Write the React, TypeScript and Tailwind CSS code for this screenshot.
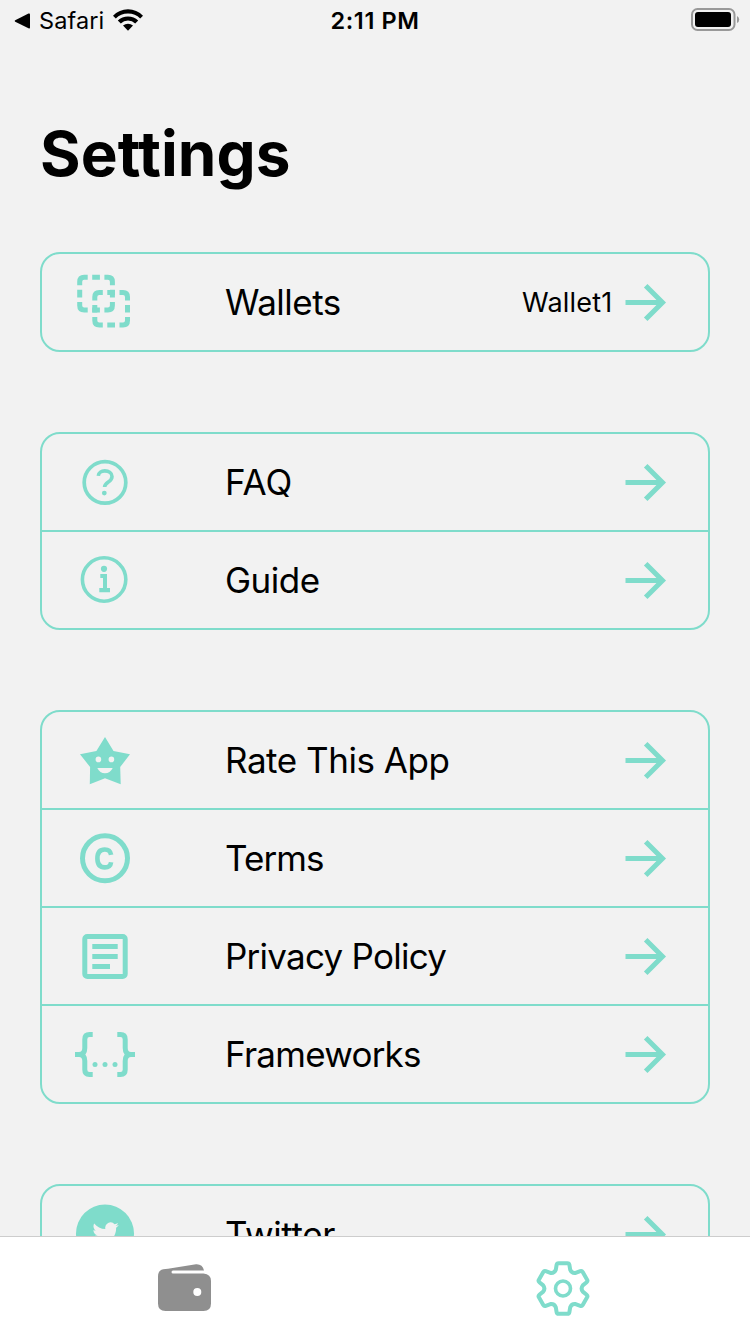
import type { ReactNode } from "react";

type IconProps = { children: ReactNode };

function RowIcon({ children }: IconProps) {
  return (
    <svg viewBox="-36 -36 72 72" className="h-[72px] w-[72px] shrink-0" fill="none" stroke="none">
      {children}
    </svg>
  );
}

const TEAL = "#7fdccb";

const dashedSquare =
  "M2.5 10.5V7Q2.5 2.5 7 2.5H10.5M15 2.5H22.7M27.2 2.5H30.7Q35.2 2.5 35.2 7V10.5M35.2 15V22.7M35.2 27.2V30.7Q35.2 35.2 30.7 35.2H27.2M22.7 35.2H15M10.5 35.2H7Q2.5 35.2 2.5 30.7V27.2M2.5 22.7V15";

const brace = "M-12.3 -19.5H-15.5Q-20.2 -19.5 -20.2 -14.8V-6Q-20.2 .5 -26 .5H-30M-26 .5Q-20.2 .5 -20.2 7V15.8Q-20.2 20.5 -15.5 20.5H-12.3";

const icons = {
  wallets: (
    <RowIcon>
      <path d={dashedSquare} transform="translate(-27.8 -27.2)" stroke={TEAL} strokeWidth="5" />
      <path d={dashedSquare} transform="translate(-12.7 -12.1)" stroke={TEAL} strokeWidth="5" />
    </RowIcon>
  ),
  faq: (
    <RowIcon>
      <circle cx="0" cy="0.4" r="20.8" stroke={TEAL} strokeWidth="3.7" />
      <path
        d="M-6.7 -6.2C-6.4 -9.4 -3.6 -11.1 -.3 -11.1C3.9 -11.1 7 -9 7 -5.6C7 -2.8 5.4 -1.5 3.3 -.1C.8 1.6 -.4 2.7 -.4 5"
        stroke={TEAL}
        strokeWidth="3.6"
      />
      <circle cx="-0.7" cy="11.1" r="2.4" fill={TEAL} />
    </RowIcon>
  ),
  guide: (
    <RowIcon>
      <circle cx="-0.9" cy="-0.5" r="21.7" stroke={TEAL} strokeWidth="3.6" />
      <circle cx="-1" cy="-11.2" r="3.1" fill={TEAL} />
      <path d="M-4.7 -6H2V8H5V12.3H-5.7V8H-2V-2H-4.7Z" fill={TEAL} />
    </RowIcon>
  ),
  rate: (
    <RowIcon>
      <path
        fillRule="evenodd"
        fill={TEAL}
        d="M0 -23L8.5 -9L25 -5.7L15.2 7L15.7 24.2L0 18.3L-15.2 24.2L-14.9 7L-25 -5.7L-8.6 -9ZM-9.4 -.6a2.8 2.8 0 1 0 5.6 0a2.8 2.8 0 1 0 -5.6 0ZM3.6 -.6a2.8 2.8 0 1 0 5.6 0a2.8 2.8 0 1 0 -5.6 0ZM-7.7 8H7.7C6 11.6 3.4 13.3 0 13.3C-3.4 13.3 -6 11.6 -7.7 8Z"
      />
    </RowIcon>
  ),
  terms: (
    <RowIcon>
      <circle cx="0" cy="0.3" r="22.5" stroke={TEAL} strokeWidth="5" />
      <path
        d="M6.1 -3.2C5.5 -6.8 3.3 -8.5 -.2 -8.5C-5 -8.5 -7.6 -5.3 -7.6 .5C-7.6 6.3 -5 9.4 -.2 9.4C3.3 9.4 5.6 7.8 6.1 4.2"
        stroke={TEAL}
        strokeWidth="4.6"
      />
    </RowIcon>
  ),
  privacy: (
    <RowIcon>
      <rect x="-20.2" y="-19.5" width="40.4" height="40" rx="2.5" stroke={TEAL} strokeWidth="5" />
      <path d="M-12.7 -9.5H12.7M-12.7 .5H12.7M-12.7 10.5H5" stroke={TEAL} strokeWidth="5" />
    </RowIcon>
  ),
  frameworks: (
    <RowIcon>
      <path d={brace} stroke={TEAL} strokeWidth="5" />
      <path d={brace} transform="scale(-1 1)" stroke={TEAL} strokeWidth="5" />
      <circle cx="-10" cy="10.4" r="2.5" fill={TEAL} />
      <circle cx="0" cy="10.4" r="2.5" fill={TEAL} />
      <circle cx="10" cy="10.4" r="2.5" fill={TEAL} />
    </RowIcon>
  ),
  twitter: (
    <RowIcon>
      <circle cx="0" cy="-0.5" r="29" fill={TEAL} />
      <path
        transform="translate(-12.6 -14) scale(1.1)"
        fill="#f2f2f2"
        d="M23.953 4.57a10 10 0 01-2.825.775 4.958 4.958 0 002.163-2.723c-.951.555-2.005.959-3.127 1.184a4.92 4.92 0 00-8.384 4.482C7.69 8.095 4.067 6.13 1.64 3.162a4.822 4.822 0 00-.666 2.475c0 1.71.87 3.213 2.188 4.096a4.904 4.904 0 01-2.228-.616v.06a4.923 4.923 0 003.946 4.827 4.996 4.996 0 01-2.212.085 4.936 4.936 0 004.604 3.417 9.867 9.867 0 01-6.102 2.105c-.39 0-.779-.023-1.17-.067a13.995 13.995 0 007.557 2.209c9.053 0 13.998-7.496 13.998-13.985 0-.21 0-.42-.015-.63A9.935 9.935 0 0024 4.59z"
      />
    </RowIcon>
  ),
};

function Arrow() {
  return (
    <svg viewBox="0 0 42 40" className="h-10 w-[42px] shrink-0" fill="none" stroke={TEAL} strokeWidth="5">
      <path d="M.5 20.5H38M20.7 3.7L37.5 20.5L20.7 37.3" />
    </svg>
  );
}

type RowData = { icon: keyof typeof icons; label: string; value?: string; spacing: string };

function Row({ icon, label, value, spacing }: RowData) {
  return (
    <div className="box-content flex h-24 items-center">
      <div className="pl-[27px]">{icons[icon]}</div>
      <span className={`ml-[84px] flex-1 text-[35px] leading-[48px] whitespace-nowrap ${spacing}`}>{label}</span>
      {value && <span className="mr-[12.5px] pt-0.5 text-[27px] leading-[36px] tracking-[0.2px]">{value}</span>}
      <div className="pr-[41px]">
        <Arrow />
      </div>
    </div>
  );
}

const groups: RowData[][] = [
  [{ icon: "wallets", label: "Wallets", value: "Wallet1", spacing: "tracking-[-0.5px]" }],
  [
    { icon: "faq", label: "FAQ", spacing: "tracking-[0px]" },
    { icon: "guide", label: "Guide", spacing: "tracking-[-0.5px]" },
  ],
  [
    { icon: "rate", label: "Rate This App", spacing: "tracking-[-0.46px]" },
    { icon: "terms", label: "Terms", spacing: "tracking-[-0.9px]" },
    { icon: "privacy", label: "Privacy Policy", spacing: "tracking-[-0.74px]" },
    { icon: "frameworks", label: "Frameworks", spacing: "tracking-[-0.75px]" },
  ],
  [{ icon: "twitter", label: "Twitter", spacing: "tracking-[-0.4px]" }],
];

function StatusBar() {
  return (
    <header className="grid h-10 shrink-0 grid-cols-3 items-center pr-[10px] pl-[14px] text-[24px] leading-[38px]">
      <div className="flex items-center">
        <svg viewBox="0 0 16 16" className="mt-px h-4 w-4">
          <path d="M1.2 7.3L14.5 .6Q16 0 16 1.5V14.5Q16 16 14.5 15.3L1.2 8.7Q0 8 1.2 7.3Z" />
        </svg>
        <span className="ml-[9px] pt-0.5 text-[23.5px] tracking-[0.1px]">Safari</span>
        <svg viewBox="0 0 30 22" className="ml-[9px] h-[22px] w-[30px]">
          <path d="M0 6.8Q6.200 .3 15 .3T30 6.800L27.200 9.500Q22.300 4.500 15 4.500T2.800 9.500Z" />
          <path d="M4.800 11.600Q9 7.500 15 7.500T25.200 11.600L22.200 14.500Q19.200 11.600 15 11.600T7.800 14.500Z" />
          <path d="M10 16.600Q12.200 14.700 15 14.700T20 16.600L15 21.800Z" />
        </svg>
      </div>
      <span className="pt-0.5 pr-[4px] text-center text-[23.5px] font-semibold tracking-[0.6px] whitespace-nowrap">
        2:11 PM
      </span>
      <svg viewBox="0 0 49 24" className="h-6 w-[49px] justify-self-end">
        <rect x="1" y="1" width="42.500" height="21" rx="5.500" fill="none" stroke="#999" strokeWidth="2" />
        <rect x="4" y="4" width="36" height="15" rx="3" />
        <path d="M46 8Q48.200 9 48.200 11.500T46 15Z" fill="#999" />
      </svg>
    </header>
  );
}

function gearPath() {
  const turn = (x: number, y: number, step: number) => {
    const a = (step * Math.PI) / 3;
    return `${(x * Math.cos(a) - y * Math.sin(a)).toFixed(2)} ${(x * Math.sin(a) + y * Math.cos(a)).toFixed(2)}`;
  };
  let d = `M${turn(-7.2, -18.7, 0)}`;
  for (let i = 0; i < 6; i++) {
    d += `L${turn(-6.4, -23.6, i)}Q${turn(-6.1, -25.3, i)} ${turn(-4.4, -25.3, i)}`;
    d += `L${turn(4.4, -25.3, i)}Q${turn(6.1, -25.3, i)} ${turn(6.4, -23.6, i)}`;
    d += `L${turn(7.2, -18.7, i)}Q${turn(8.7, -15.1, i)} ${turn(-7.2, -18.7, i + 1)}`;
  }
  return d + "Z";
}

function TabBar() {
  return (
    <nav className="grid h-[98px] shrink-0 grid-cols-2 border-t border-[#cdcdcd] bg-white pt-[23px]">
      <div className="flex justify-center pt-1 pr-[6px]">
        <svg viewBox="158 1264 53 47" className="h-[47px] w-[53px]" fill="#8f8f8f">
          <path
            fillRule="evenodd"
            d="M165.500 1269L168 1268.700L196 1264.200Q202.500 1263.800 204 1270.500H173Q171.500 1270.500 171.500 1272Q171.500 1273.500 173 1273.500H203.500Q211 1274 211 1281V1303.500Q211 1311 203.500 1311H165.500Q158 1311 158 1303.500V1276.500Q158 1269 165.500 1269ZM193.300 1292a4 4 0 1 0 8 0a4 4 0 1 0 -8 0Z"
          />
        </svg>
      </div>
      <div className="flex justify-center">
        <svg viewBox="-28 -28.500 56 56" className="h-14 w-14" fill="none" stroke={TEAL} strokeWidth="4" strokeLinejoin="round">
          <path d={gearPath()} />
          <circle r="7.500" strokeWidth="3.600" />
        </svg>
      </div>
    </nav>
  );
}

export default function App() {
  return (
    <div className="flex h-[1334px] w-[750px] flex-col overflow-hidden bg-[#f2f2f2] font-['Inter','Liberation_Sans',sans-serif] text-black">
      <StatusBar />
      <main className="min-h-0 flex-1 overflow-hidden px-10">
        <h1 className="mt-[74px] text-[62px] leading-20 font-bold tracking-[0.05px]">Settings</h1>
        <div className="mt-[58px] flex flex-col gap-20">
          {groups.map((rows) => (
            <section
              key={rows[0].label}
              className="shrink-0 divide-y-2 divide-[#7fdccb] rounded-[20px] border-2 border-[#7fdccb]"
            >
              {rows.map((row) => (
                <Row key={row.label} {...row} />
              ))}
            </section>
          ))}
        </div>
      </main>
      <TabBar />
    </div>
  );
}
